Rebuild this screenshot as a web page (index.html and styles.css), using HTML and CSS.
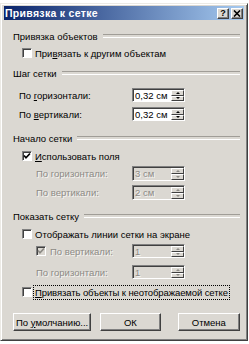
FILE: index.html
```html
<!DOCTYPE html>
<html lang="ru">
<head>
    <meta charset="UTF-8">
    <title>Привязка к сетке</title>
    <link rel="stylesheet" href="styles.css">
</head>
<body>
<div class="dialog">
    <div class="titlebar">
        <span class="title">Привязка к сетке</span>
        <div class="tbtns">
            <span class="tbtn help">?</span>
            <span class="tbtn close">
                <svg width="8" height="7" viewBox="0 0 8 7"><path d="M1 0.5 L7 6.5 M7 0.5 L1 6.5" stroke="#000" stroke-width="1.6"/></svg>
            </span>
        </div>
    </div>

    <div class="content">
        <div class="sec" style="margin-top:9px"><span>Привязка объектов</span></div>
        <div class="opt" style="margin-top:3px">
            <span class="box"></span>
            <span>При<u>в</u>язать к другим объектам</span>
        </div>

        <div class="sec" style="margin-top:6px"><span>Шаг сетки</span></div>
        <div class="field" style="margin-top:8px">
            <span class="lbl l1">По <u>г</u>оризонтали:</span>
            <div class="spin"><span class="val">0,32 см</span><span class="arrows"><i class="up"></i><i class="dn"></i></span></div>
        </div>
        <div class="field" style="margin-top:5px">
            <span class="lbl l1">По <u>в</u>ертикали:</span>
            <div class="spin"><span class="val">0,32 см</span><span class="arrows"><i class="up"></i><i class="dn"></i></span></div>
        </div>

        <div class="sec" style="margin-top:10px"><span>Начало сетки</span></div>
        <div class="opt" style="margin-top:4px">
            <span class="box"><svg width="8" height="8" viewBox="0 0 8 8"><path d="M1 3.5 L3 5.8 L7 1.5" fill="none" stroke="#000" stroke-width="1.7"/></svg></span>
            <span><u>И</u>спользовать поля</span>
        </div>
        <div class="field tall off" style="margin-top:3px">
            <span class="lbl l2">По горизонтали:</span>
            <div class="spin"><span class="val">3 см</span><span class="arrows"><i class="up"></i><i class="dn"></i></span></div>
        </div>
        <div class="field tall off" style="margin-top:4px">
            <span class="lbl l2">По вертикали:</span>
            <div class="spin"><span class="val">2 см</span><span class="arrows"><i class="up"></i><i class="dn"></i></span></div>
        </div>

        <div class="sec" style="margin-top:9px"><span>Показать сетку</span></div>
        <div class="opt" style="margin-top:4px">
            <span class="box"></span>
            <span>Отображать линии сетки на экране</span>
        </div>
        <div class="field off" style="margin-top:3px">
            <span class="lbl l2 withbox">
                <span class="box dis"><svg width="8" height="8" viewBox="0 0 8 8"><path d="M1 3.5 L3 5.8 L7 1.5" fill="none" stroke="#8c8a85" stroke-width="1.7"/></svg></span>
                <span>По вертикали:</span>
            </span>
            <div class="spin"><span class="val">1</span><span class="arrows"><i class="up"></i><i class="dn"></i></span></div>
        </div>
        <div class="field off" style="margin-top:7px">
            <span class="lbl l2">По горизонтали:</span>
            <div class="spin"><span class="val">1</span><span class="arrows"><i class="up"></i><i class="dn"></i></span></div>
        </div>
        <div class="opt" style="margin-top:6px">
            <span class="box"></span>
            <span class="focus"><u>П</u>ривязать объекты к неотображаемой сетке</span>
        </div>

        <div class="buttons">
            <button class="btn b1">По <u>у</u>молчанию...</button>
            <button class="btn b2">ОК</button>
            <button class="btn b3">Отмена</button>
        </div>
    </div>
</div>
</body>
</html>
```

FILE: styles.css
```css
*{
    margin: 0;
    padding: 0;
    box-sizing: border-box;
}
body{
    background: #fff;
    font-family: "Liberation Sans", Arial, sans-serif;
    font-size: 9.5px;
    color: #000;
}
.dialog{
    margin-top: 3px;
    width: 248px;
    height: 338px;
    background: #dbd8d2;
    border: 1px solid;
    border-color: #eceae5 #404040 #404040 #eceae5;
    box-shadow: inset 1px 1px #fff, inset -1px -1px #808080;
    padding: 2px 3px;
    display: flex;
    flex-direction: column;
}
.titlebar{
    height: 14px;
    display: flex;
    align-items: center;
    justify-content: space-between;
    background: linear-gradient(to right, #0a246a, #a6caf0);
    padding: 0 1px 0 1px;
}
.title{
    color: #fff;
    font-weight: bold;
    font-size: 10.5px;
    letter-spacing: 0.3px;
}
.tbtns{
    display: flex;
    gap: 2px;
}
.tbtn{
    width: 12px;
    height: 11px;
    background: #dbd8d2;
    border: 1px solid;
    border-color: #fff #404040 #404040 #fff;
    box-shadow: inset -1px -1px #808080;
    display: flex;
    align-items: center;
    justify-content: center;
    font-weight: bold;
    font-size: 9px;
    line-height: 1;
}

.content{
    padding: 0 4px 0 9px;
    display: flex;
    flex-direction: column;
    white-space: nowrap;
}
.sec{
    height: 14px;
    display: flex;
    align-items: center;
}
.sec::after{
    content: "";
    flex: 1;
    margin-left: 5px;
    height: 2px;
    border-top: 1px solid #a09d97;
    border-bottom: 1px solid #fff;
}
.opt{
    height: 14px;
    display: flex;
    align-items: center;
    padding-left: 9px;
}
.box{
    width: 10px;
    height: 10px;
    flex: 0 0 10px;
    background: #fff;
    border: 1px solid;
    border-color: #808080 #fff #fff #808080;
    box-shadow: inset 1px 1px #404040;
    display: flex;
    align-items: center;
    justify-content: center;
    margin-right: 3px;
}
.box.dis{
    background: #dbd8d2;
}
.focus{
    outline: 1px dotted #000;
    padding: 1px 1px 1px 1px;
    margin-left: -1px;
    letter-spacing: -0.1px;
}

.field{
    height: 14px;
    display: grid;
    grid-template-columns: 119px 53px;
    align-items: center;
}
.field.tall{
    height: 15px;
}
.l1{
    padding-left: 6px;
}
.l2{
    padding-left: 23px;
}
.withbox{
    display: flex;
    align-items: center;
}
.withbox .box{
    margin-right: 4px;
}
.off .lbl,
.off .val{
    color: #8c8a85;
    text-shadow: 1px 1px 0 #f6f5f2;
}
.spin{
    height: 100%;
    display: flex;
    background: #fff;
    border: 1px solid;
    border-color: #808080 #fff #fff #808080;
    box-shadow: inset 1px 1px #404040;
}
.off .spin{
    background: #dbd8d2;
}
.val{
    flex: 1;
    padding: 1px 0 0 2px;
    line-height: 11px;
}
.arrows{
    width: 13px;
    display: flex;
    flex-direction: column;
    padding-top: 1px;
}
.arrows i{
    flex: 1;
    background: #dbd8d2;
    border: 1px solid;
    border-color: #fff #404040 #404040 #fff;
    display: flex;
    align-items: center;
    justify-content: center;
}
.arrows i::before{
    content: "";
    border-left: 2px solid transparent;
    border-right: 2px solid transparent;
}
.arrows .up::before{
    border-bottom: 2px solid #000;
}
.arrows .dn::before{
    border-top: 2px solid #000;
}
.off .arrows i::before{
    border-bottom-color: #8c8a85;
    border-top-color: #8c8a85;
}

.buttons{
    display: flex;
    margin-top: 14px;
    height: 18px;
}
.btn{
    font-family: "Liberation Sans", Arial, sans-serif;
    font-size: 9.5px;
    color: #000;
    background: #dbd8d2;
    border: 1px solid;
    border-color: #fff #404040 #404040 #fff;
    box-shadow: inset -1px -1px #808080;
}
.b1{
    width: 79px;
}
.b2{
    width: 61px;
    margin-left: 9px;
}
.b3{
    width: 63px;
    margin-left: 17px;
}
```
